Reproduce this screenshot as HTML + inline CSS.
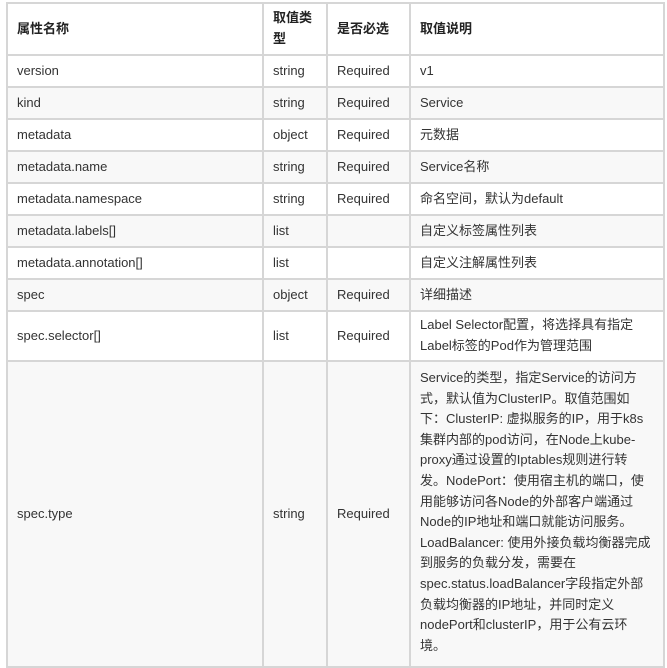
<!DOCTYPE html>
<html><head><meta charset="utf-8"><style>
html,body{margin:0;padding:0;background:#fff;width:667px;height:656px;overflow:hidden}
table{position:absolute;left:6px;top:2px;border-collapse:collapse;table-layout:fixed;font-family:"Liberation Sans","Noto Sans CJK SC",sans-serif;font-size:13px;color:#333}
td,th{border:2px solid #d6d6d6;padding:0 9px;text-align:left;vertical-align:middle;line-height:20.6px}
th{font-weight:bold;color:#222}
tr{height:32px}
tr:nth-child(odd) td{background:#f8f8f8}
tr.h{height:52px}
tr.h th{background:#fff}
.nw{white-space:nowrap;overflow:hidden}
</style></head><body>
<table>
<colgroup><col style="width:256px"><col style="width:64px"><col style="width:83px"><col style="width:254px"></colgroup>
<tr class="h"><th>属性名称</th><th>取值类型</th><th>是否必选</th><th>取值说明</th></tr>
<tr><td>version</td><td>string</td><td>Required</td><td>v1</td></tr>
<tr><td>kind</td><td>string</td><td>Required</td><td>Service</td></tr>
<tr><td>metadata</td><td>object</td><td>Required</td><td>元数据</td></tr>
<tr><td>metadata.name</td><td>string</td><td>Required</td><td>Service名称</td></tr>
<tr><td>metadata.namespace</td><td>string</td><td>Required</td><td>命名空间，默认为default</td></tr>
<tr><td>metadata.labels[]</td><td>list</td><td></td><td>自定义标签属性列表</td></tr>
<tr><td>metadata.annotation[]</td><td>list</td><td></td><td>自定义注解属性列表</td></tr>
<tr><td>spec</td><td>object</td><td>Required</td><td>详细描述</td></tr>
<tr style="height:50px"><td>spec.selector[]</td><td>list</td><td>Required</td><td class="nw">Label Selector配置，将选择具有指定<br>Label标签的Pod作为管理范围</td></tr>
<tr style="height:306px"><td>spec.type</td><td>string</td><td>Required</td><td class="nw" style="vertical-align:top;padding-top:6px">Service的类型，指定Service的访问方<br>式，默认值为ClusterIP。取值范围如<br>下：ClusterIP: 虚拟服务的IP，用于k8s<br>集群内部的pod访问，在Node上kube-<br>proxy通过设置的Iptables规则进行转<br>发。NodePort：使用宿主机的端口，使<br>用能够访问各Node的外部客户端通过<br>Node的IP地址和端口就能访问服务。<br>LoadBalancer: 使用外接负载均衡器完成<br>到服务的负载分发，需要在<br>spec.status.loadBalancer字段指定外部<br>负载均衡器的IP地址，并同时定义<br>nodePort和clusterIP，用于公有云环<br>境。</td></tr>
</table>
</body></html>
